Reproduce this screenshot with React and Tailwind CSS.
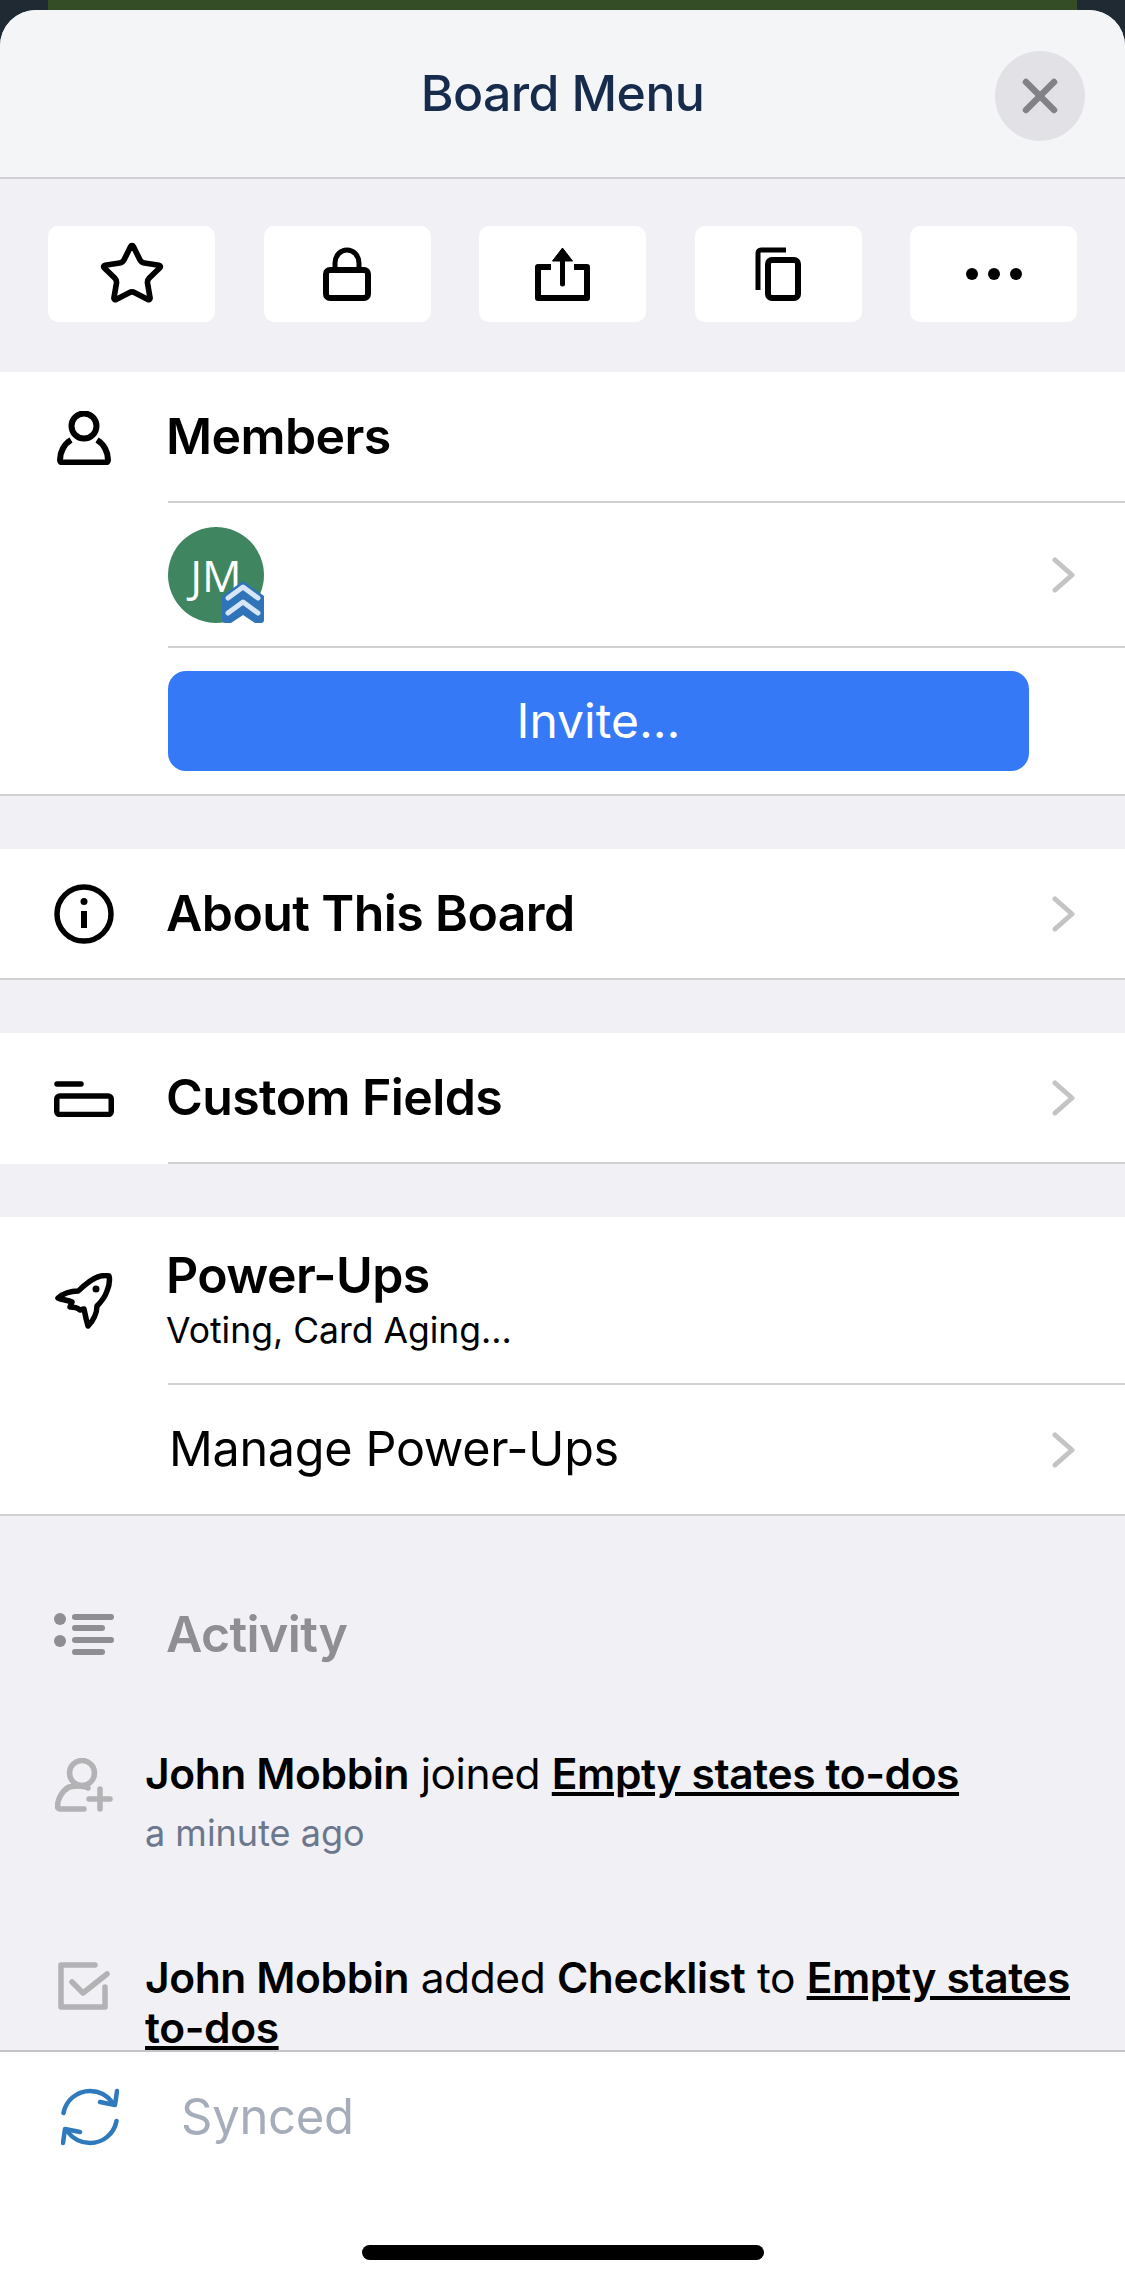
import { Star } from 'lucide-react'

function Lock() {
  return (
    <svg width="48" height="54" viewBox="0 0 48 54" fill="none" stroke="#000" strokeWidth="6">
      <rect x="3" y="23" width="42" height="28" rx="4" />
      <path d="M12 23v-7a12 13 0 0 1 24 0v7" strokeWidth="5" />
    </svg>
  )
}

function Share() {
  return (
    <svg width="55" height="54" viewBox="0 0 55 54" fill="none" stroke="#000" strokeWidth="6" strokeLinejoin="round">
      <path d="M16 20H3v31h49V20H39" />
      <path d="M27.5 37V5" strokeWidth="5" strokeLinecap="round" />
      <path d="M27.5 1l10 13h-20z" fill="#000" strokeWidth="1" />
    </svg>
  )
}

function Copy() {
  return (
    <svg width="46" height="54" viewBox="0 0 46 54" fill="none" stroke="#000" strokeWidth="6">
      <path d="M31 3H6a3 3 0 0 0-3 3v37" strokeWidth="5" />
      <rect x="13" y="13" width="30" height="38" rx="4" />
    </svg>
  )
}

function Dots() {
  return (
    <svg width="56" height="12" viewBox="0 0 56 12" fill="#000">
      <circle cx="6" cy="6" r="6" />
      <circle cx="28" cy="6" r="6" />
      <circle cx="50" cy="6" r="6" />
    </svg>
  )
}

function Person() {
  return (
    <svg width="54" height="54" viewBox="0 0 54 54" fill="none" stroke="#000" strokeWidth="6" strokeLinejoin="round">
      <circle cx="27" cy="15" r="12.5" />
      <path d="M14 29C7 33 3 41 3 49c0 1.5 1 2.500 2.500 2.500h43c1.500 0 2.500-1 2.500-2.500 0-8-4-16-11-20" />
    </svg>
  )
}

function Info() {
  return (
    <svg width="60" height="60" viewBox="0 0 60 60" fill="none" stroke="#000" strokeWidth="5.500">
      <circle cx="30" cy="30" r="27" />
      <path d="M30 27v17" strokeWidth="6" />
      <circle cx="30" cy="17.500" r="3.500" fill="#000" stroke="none" />
    </svg>
  )
}

function FieldIcon() {
  return (
    <svg width="60" height="36" viewBox="0 0 60 36" fill="none" stroke="#000" strokeWidth="5.500" strokeLinecap="round">
      <path d="M3 3h24" />
      <rect x="2.750" y="15" width="54.500" height="18.500" rx="3" />
    </svg>
  )
}

function Rocket() {
  return (
    <svg width="58" height="56" viewBox="0 0 58 56" fill="none" stroke="#000" strokeWidth="5.500" strokeLinejoin="round">
      <path d="M54 3c-8-2-17 3-24 9-3 2-5 5-7 6-6 0-14 2-20 7 4 2 10 2 14 4l-2 5c4 0 8 1 10 3l4-1c1 5 2 10 4 17 5-5 9-13 9-20 3-3 8-9 10-15 2-5 3-11 2-15z" />
      <circle cx="41" cy="16" r="3.500" fill="#000" stroke="none" />
    </svg>
  )
}

function ListIcon() {
  return (
    <svg width="60" height="42" viewBox="0 0 60 42" fill="#8e8e93">
      <circle cx="6" cy="6" r="6" />
      <circle cx="6" cy="28" r="6" />
      <rect x="18" y="1" width="42" height="6" rx="3" />
      <rect x="18" y="12" width="33" height="6" rx="3" />
      <rect x="18" y="24" width="42" height="6" rx="3" />
      <rect x="18" y="36" width="33" height="6" rx="3" />
    </svg>
  )
}

function PersonAdd() {
  return (
    <svg width="58" height="54" viewBox="0 0 58 54" fill="none" stroke="#b3b3b6" strokeWidth="5.500" strokeLinecap="round" strokeLinejoin="round">
      <circle cx="27" cy="15" r="12.500" />
      <path d="M29 51H5c-1.500 0-2.500-1-2.500-2.500C2.500 41 7 33 14 29c5-1 14-2 19 1" />
      <path d="M45 31v20M34 41h21" />
    </svg>
  )
}

function CheckBox() {
  return (
    <svg width="52" height="48" viewBox="0 0 52 48" fill="none" stroke="#b3b3b6" strokeWidth="5.500" strokeLinecap="round" strokeLinejoin="round">
      <path d="M37 3H3v42h44V25" />
      <path d="M14 20l11 11 24-19" />
    </svg>
  )
}

function Sync() {
  return (
    <svg width="58" height="58" viewBox="0 0 58 58" fill="none" stroke="#2f79bd" strokeWidth="4.500" strokeLinecap="round" strokeLinejoin="round">
      <path d="M2.500 25C5 12 16 3 29 3c9 0 17 4 23 12" />
      <path d="M55.500 33C53 46 42 55 29 55c-9 0-17-4-23-12" />
      <path d="M56 3l-2 14-15-3" />
      <path d="M2 55l2-14 15 3" />
    </svg>
  )
}

function Chevron() {
  return (
    <svg width="23" height="36" viewBox="0 0 23 36" fill="none" stroke="#c4c4c6" strokeWidth="5" strokeLinecap="round" strokeLinejoin="round">
      <path d="M3 3l17 15-17 15" />
    </svg>
  )
}

function Avatar() {
  return (
    <div className="relative flex h-[96px] w-[96px] items-center justify-center rounded-full bg-[#3f8660] font-['Open_Sans',sans-serif] text-[44px] text-white">
      JM
      <svg className="absolute bottom-0 right-0" width="42" height="42" viewBox="0 0 42 42">
        <path d="M21 0l21 15v24a3 3 0 0 1-3 3h-6l-12-8-12 8H3a3 3 0 0 1-3-3V15z" fill="#2f74b9" />
        <path d="M6 17l15-11 15 11M6 32l15-11 15 11" fill="none" stroke="#d6e6f6" strokeWidth="5" strokeLinecap="round" strokeLinejoin="round" />
      </svg>
    </div>
  )
}

function ToolButton({ children }) {
  return (
    <button className="flex h-[96px] w-[167px] items-center justify-center rounded-[10px] bg-white">
      {children}
    </button>
  )
}

function IconCol({ children }) {
  return <div className="flex w-[168px] shrink-0 justify-center">{children}</div>
}

const lineClass = 'border-b-2 border-[#d1d1d4]'
const titleClass = '-ml-[2px] text-[50px] font-semibold tracking-[-0.6px] text-black'

export default function App() {
  return (
    <div className="flex h-[2284px] w-[1125px] flex-col overflow-hidden bg-[#1f2a33] font-['Inter',sans-serif]">
      <div className="mx-[48px] h-[10px] shrink-0 bg-[#344d26]" />

      <div className="flex min-h-0 flex-1 flex-col overflow-hidden rounded-t-[36px] bg-[#f0f0f5]">
        <header className={`relative flex h-[169px] shrink-0 items-center justify-center bg-[#f3f5f7] ${lineClass}`}>
          <h1 className="text-[50px] font-medium tracking-[-0.6px] text-[#172b4d]">Board Menu</h1>
          <button className="absolute right-[40px] top-[41px] flex h-[90px] w-[90px] items-center justify-center rounded-full bg-[#e2e2e6]">
            <svg width="36" height="36" viewBox="0 0 36 36" fill="none" stroke="#818186" strokeWidth="6.500" strokeLinecap="round">
              <path d="M4 4l28 28M32 4L4 32" />
            </svg>
          </button>
        </header>

        <div className="min-h-0 flex-1 overflow-hidden">
          <div className="flex justify-between px-[48px] pb-[50px] pt-[47px]">
            <ToolButton><Star size={68} strokeWidth={2} color="#000" /></ToolButton>
            <ToolButton><Lock /></ToolButton>
            <ToolButton><Share /></ToolButton>
            <ToolButton><Copy /></ToolButton>
            <ToolButton><Dots /></ToolButton>
          </div>

          {/* members */}
          <section className={`mb-[53px] bg-white ${lineClass}`}>
            <div className="flex h-[131px] items-center">
              <IconCol><Person /></IconCol>
              <div className={`flex h-full flex-1 items-center ${lineClass}`}>
                <div className={titleClass}>Members</div>
              </div>
            </div>
            <div className={`ml-[168px] flex h-[145px] items-center justify-between pr-[50px] ${lineClass}`}>
              <Avatar />
              <Chevron />
            </div>
            <div className="pb-[23px] pl-[168px] pr-[96px] pt-[23px]">
              <button className="flex h-[100px] w-full items-center justify-center rounded-[18px] bg-[#3579f6] text-[48px] text-white">
                Invite...
              </button>
            </div>
          </section>

          <section className={`mb-[53px] flex h-[131px] items-center justify-between bg-white pr-[50px] ${lineClass}`}>
            <div className="flex items-center">
              <IconCol><Info /></IconCol>
              <div className={titleClass}>About This Board</div>
            </div>
            <Chevron />
          </section>

          <section className="mb-[53px] flex h-[131px] bg-white">
            <IconCol><div className="flex h-full items-center"><FieldIcon /></div></IconCol>
            <div className={`flex flex-1 items-center justify-between pr-[50px] ${lineClass}`}>
              <div className={titleClass}>Custom Fields</div>
              <Chevron />
            </div>
          </section>

          <section className={`bg-white ${lineClass}`}>
            <div className="flex h-[168px] items-center">
              <IconCol><Rocket /></IconCol>
              <div className={`flex h-full flex-1 flex-col justify-center pt-[4px] ${lineClass}`}>
                <div className={`${titleClass} leading-[54px]`}>Power-Ups</div>
                <div className="-ml-[2px] mt-[4px] text-[35.5px] leading-[50px] text-black">Voting, Card Aging...</div>
              </div>
            </div>
            <div className="ml-[169px] flex h-[129px] items-center justify-between pr-[50px]">
              <div className="text-[48.5px] tracking-[-0.3px] text-black">Manage Power-Ups</div>
              <Chevron />
            </div>
          </section>

          {/* activity */}
          <div className="mt-[58px] flex h-[120px] items-center">
            <IconCol><ListIcon /></IconCol>
            <div className="-ml-[2px] text-[50px] font-semibold tracking-[-0.6px] text-[#8e8e93]">Activity</div>
          </div>
          <div className="mt-[55px] flex">
            <IconCol><div className="mt-[9px]"><PersonAdd /></div></IconCol>
            <div className="-ml-[23px] flex-1 pr-[30px]">
              <div className="text-[42.5px] leading-[50px] tracking-[-0.4px] text-black">
                <b className="font-semibold">John Mobbin</b> joined <b className="font-semibold underline">Empty states to-dos</b>
              </div>
              <div className="mt-[12px] text-[36px] leading-[44px] text-[#6b778c]">a minute ago</div>
            </div>
          </div>
          <div className="mt-[98px] flex">
            <IconCol><div className="mt-[9px]"><CheckBox /></div></IconCol>
            <div className="-ml-[23px] flex-1 pr-[30px] text-[42.5px] leading-[50px] tracking-[-0.4px] text-black">
              <b className="font-semibold">John Mobbin</b> added <b className="font-semibold">Checklist</b> to <b className="font-semibold underline">Empty states to-dos</b>
            </div>
          </div>
        </div>

        <footer className="relative h-[234px] shrink-0 border-t-2 border-[#c4c4c8] bg-white">
          <div className="flex items-center pl-[61px] pt-[28px]">
            <Sync />
            <div className="ml-[62px] text-[49px] tracking-[-0.3px] text-[#a5adba]">Synced</div>
          </div>
          <div className="absolute bottom-[24px] left-[362px] h-[15px] w-[402px] rounded-full bg-black" />
        </footer>
      </div>
    </div>
  )
}
